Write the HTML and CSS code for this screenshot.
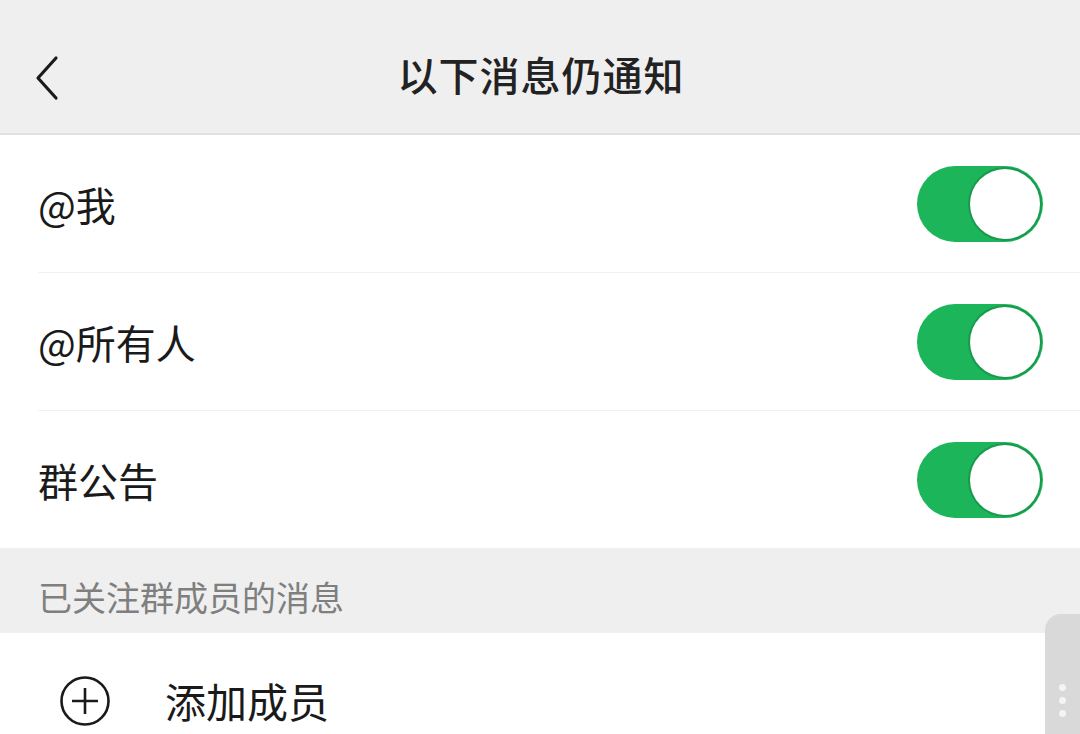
FILE: index.html
```html
<!DOCTYPE html>
<html lang="zh-CN">
<head>
<meta charset="utf-8">
<link rel="stylesheet" href="styles.css">
</head>
<body>
<div class="page">
  <header class="topbar">
    <svg class="back" width="30" height="48" viewBox="0 0 30 48"><path d="M22 4 L4 24 L22 44" fill="none" stroke="#1a1a1a" stroke-width="3.2" stroke-linecap="round" stroke-linejoin="round"/></svg>
    <h1 class="title">以下消息仍通知</h1>
  </header>
  <section class="group">
    <div class="row"><span class="label">@我</span><span class="toggle"><span class="knob"></span></span></div>
    <div class="row"><span class="label">@所有人</span><span class="toggle"><span class="knob"></span></span></div>
    <div class="row last"><span class="label">群公告</span><span class="toggle"><span class="knob"></span></span></div>
  </section>
  <div class="section-title">已关注群成员的消息</div>
  <section class="group">
    <div class="add-row">
      <svg class="plus" width="52" height="52" viewBox="0 0 52 52"><circle cx="26" cy="26" r="23.5" fill="none" stroke="#1a1a1a" stroke-width="2.6"/><path d="M26 13 V39 M13 26 H39" stroke="#1a1a1a" stroke-width="2.6"/></svg>
      <span class="add-label">添加成员</span>
    </div>
  </section>
  <div class="scroller"><span class="dot"></span><span class="dot"></span><span class="dot"></span></div>
</div>
</body>
</html>
```
FILE: styles.css
```css
* { box-sizing: border-box; }
html, body { margin: 0; padding: 0; }
body {
  width: 1080px;
  height: 734px;
  overflow: hidden;
  background: #ffffff;
  font-family: "Noto Sans CJK SC", "Noto Sans", sans-serif;
  color: #1a1a1a;
}
.page { position: relative; width: 1080px; height: 734px; overflow: hidden; }
.topbar {
  height: 135px;
  background: #efefef;
  border-bottom: 2px solid #e0e0e0;
  display: flex;
  align-items: center;
  justify-content: center;
  position: relative;
}
.back { position: absolute; left: 34px; top: 54px; }
.title {
  margin: 0;
  font-size: 40px;
  font-weight: 500;
  letter-spacing: 1px;
  color: #222;
  line-height: 1;
  padding-top: 14px;
  padding-left: 2px;
}
.group { background: #fff; }
.row {
  height: 138px;
  margin-left: 38px;
  padding-right: 37px;
  display: flex;
  align-items: center;
  justify-content: space-between;
  border-bottom: 1px solid #f0f0f0;
}
.row.last { border-bottom: none; height: 137px; }
.label { font-size: 40px; line-height: 1; color: #1a1a1a; }
.toggle {
  width: 126px;
  height: 76px;
  border-radius: 38px;
  background: #1db55a;
  display: flex;
  align-items: center;
  justify-content: flex-end;
  padding: 3px;
}
.knob {
  width: 70px;
  height: 70px;
  border-radius: 50%;
  background: #fff;
  box-shadow: 0 0 0 2px #189a4d;
}
.section-title {
  height: 85px;
  background: #efefef;
  padding-left: 38px;
  padding-top: 32px;
  font-size: 34px;
  line-height: 1;
  color: #7f7f7f;
}
.add-row {
  height: 140px;
  display: flex;
  align-items: flex-start;
  padding-left: 59px;
  padding-top: 42px;
}
.plus { flex: none; }
.add-label {
  margin-left: 54px;
  font-size: 41px;
  line-height: 1;
  margin-top: 5px;
}
.scroller {
  position: absolute;
  left: 1045px;
  top: 614px;
  width: 40px;
  height: 130px;
  background: #d9d9d9;
  border-top-left-radius: 16px;
  display: flex;
  flex-direction: column;
  align-items: center;
  padding-top: 70px;
  padding-right: 5px;
  gap: 6px;
}
.dot { width: 7px; height: 7px; border-radius: 50%; background: #f4f4f4; }
```
